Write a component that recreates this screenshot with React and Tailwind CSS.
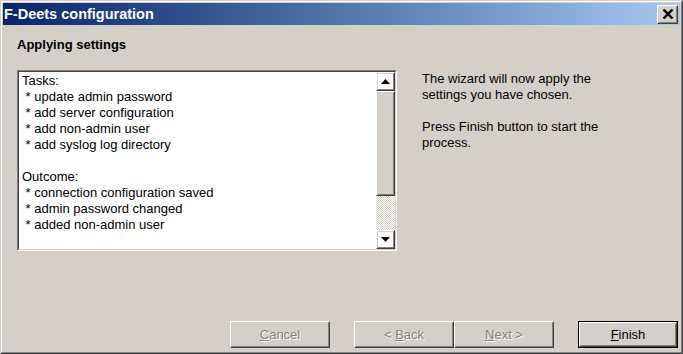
import React from 'react';

const font = { fontFamily: '"Liberation Sans", Arial, sans-serif' };

const raised = 'border border-t-white border-l-white border-r-[#404040] border-b-[#404040]';
const raisedInner = 'border border-t-[#d4d0c8] border-l-[#d4d0c8] border-r-[#808080] border-b-[#808080]';

const Btn = ({ children, disabled, isDefault }) => {
  if (isDefault) {
    return (
      <div className="w-[100px] h-[27px] border border-black">
        <div className={`h-full ${raised}`}>
          <div className={`h-full ${raisedInner} flex items-center justify-center text-[13px] text-black`}>
            {children}
          </div>
        </div>
      </div>
    );
  }
  return (
    <div className={`w-[100px] h-[27px] ${raised}`}>
      <div
        className={`h-full ${raisedInner} flex items-center justify-center text-[13px] whitespace-pre ${
          disabled ? 'text-[#808080] [text-shadow:1px_1px_0_#fff]' : 'text-black'
        }`}
      >
        {children}
      </div>
    </div>
  );
};

const Arrow = ({ up }) => (
  <svg width="9" height="5" viewBox="0 0 9 5">
    {up ? <path d="M4.5 0 L9 5 L0 5 Z" fill="#000" /> : <path d="M0 0 L9 0 L4.5 5 Z" fill="#000" />}
  </svg>
);

const ScrollBtn = ({ up }) => (
  <div className={`h-[19px] ${raised}`}>
    <div className={`h-full ${raisedInner} flex items-center justify-center`}>
      <Arrow up={up} />
    </div>
  </div>
);

const lines = [
  'Tasks:',
  ' * update admin password',
  ' * add server configuration',
  ' * add non-admin user',
  ' * add syslog log directory',
  ' ',
  'Outcome:',
  ' * connection configuration saved',
  ' * admin password changed',
  ' * added non-admin user',
];

export default function App() {
  return (
    <div style={font} className="w-[683px] h-[354px] bg-[#d4d0c8] border border-t-[#d4d0c8] border-l-[#d4d0c8] border-r-[#404040] border-b-[#404040]">
      <div className="h-full border border-t-white border-l-white border-r-[#808080] border-b-[#808080] p-px flex flex-col">
        {/* Title bar */}
        <div className="h-[22px] flex items-center justify-between pl-[1px] pr-[2px] bg-gradient-to-r from-[#0a246a] to-[#a6caf0]">
          <span className="text-white font-bold text-[14.5px] leading-none">F-Deets configuration</span>
          <div className={`w-[21px] h-[19px] ${raised} bg-[#d4d0c8]`}>
            <div className={`h-full ${raisedInner} flex items-center justify-center`}>
              <svg width="12" height="10" viewBox="0 0 12 10">
                <path d="M1.5 0.5 L10.5 9.5 M10.5 0.5 L1.5 9.5" stroke="#000" strokeWidth="2.4" />
              </svg>
            </div>
          </div>
        </div>

        {/* Content */}
        <div className="flex-1 flex flex-col pl-[14px] pt-[12px]">
          <div className="text-[13px] font-bold leading-[16px] text-black">Applying settings</div>

          <div className="flex mt-[17px]">
            <div className="w-[380px] h-[181px] border border-t-[#808080] border-l-[#808080] border-r-white border-b-white">
              <div className="h-full border border-t-[#404040] border-l-[#404040] border-r-[#d4d0c8] border-b-[#d4d0c8] bg-white flex">
                <div className="flex-1 pl-[3px] pt-[1px] text-[13px] leading-[16px] text-black whitespace-pre">
                  {lines.map((l, i) => (
                    <div key={i}>{l}</div>
                  ))}
                </div>
                <div className="w-[19px] flex flex-col">
                  <ScrollBtn up />
                  <div className={`h-[105px] ${raised}`}>
                    <div className={`h-full ${raisedInner} bg-[#d4d0c8]`} />
                  </div>
                  <div className="flex-1 bg-[repeating-conic-gradient(#ffffff_0_25%,#d4d0c8_0_50%)] bg-[length:2px_2px]" />
                  <ScrollBtn />
                </div>
              </div>
            </div>

            <div className="ml-[25px] pt-[1px] text-[13px] leading-[16px] text-black">
              <div>The wizard will now apply the</div>
              <div>settings you have chosen.</div>
              <div className="h-[16px]" />
              <div>Press Finish button to start the</div>
              <div>process.</div>
            </div>
          </div>

          <div className="mt-auto flex justify-end pr-[2px] pb-[3px]">
            <Btn disabled>
              <u>C</u>ancel
            </Btn>
            <div className="w-[24px]" />
            <Btn disabled>
              {'< '}
              <u>B</u>ack
            </Btn>
            <Btn disabled>
              <u>N</u>ext{' >'}
            </Btn>
            <div className="w-[24px]" />
            <Btn isDefault>
              <u>F</u>inish
            </Btn>
          </div>
        </div>
      </div>
    </div>
  );
}
